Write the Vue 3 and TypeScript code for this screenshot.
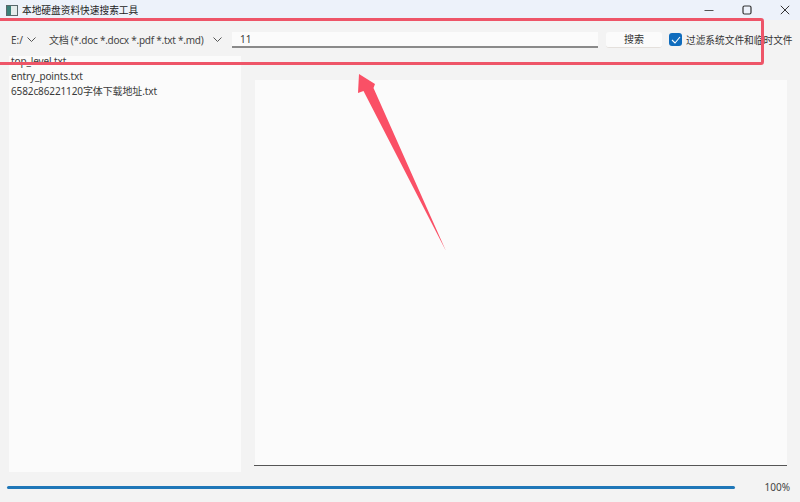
<script setup lang="ts">
const files: string[] = ['top_level.txt', 'entry_points.txt', '6582c86221120字体下载地址.txt']
</script>

<template>
  <div class="win">
    <header class="title">
      <svg class="appicon" width="12" height="11" viewBox="0 0 12 11">
        <rect x="0.5" y="0.5" width="11" height="10" fill="#e4ecec" stroke="#59686c" />
        <rect x="1" y="1" width="4" height="9" fill="#3b8079" />
      </svg>
      <span class="title-text">本地硬盘资料快速搜索工具</span>
      <div class="winbtns">
        <svg width="10" height="10" viewBox="0 0 10 10"><path d="M0.5 5.5h9" stroke="#555" stroke-width="1" /></svg>
        <svg width="10" height="10" viewBox="0 0 10 10"><rect x="1" y="1" width="8" height="8" rx="1.5" fill="none" stroke="#333" stroke-width="1.2" /></svg>
        <svg width="10" height="10" viewBox="0 0 10 10"><path d="M0.8 0.8l8.4 8.4M9.2 0.8l-8.4 8.4" stroke="#333" stroke-width="1" /></svg>
      </div>
    </header>

    <div class="toolbar">
      <div class="combo drive">
        <span>E:/</span>
        <svg width="9" height="5" viewBox="0 0 9 5"><path d="M0.5 0.5l4 4 4-4" fill="none" stroke="#555" /></svg>
      </div>
      <div class="combo kind">
        <span class="kind-text">文档 (*.doc *.docx *.pdf *.txt *.md)</span>
        <svg width="9" height="5" viewBox="0 0 9 5"><path d="M0.5 0.5l4 4 4-4" fill="none" stroke="#555" /></svg>
      </div>
      <div class="search-input">11</div>
      <button class="search-btn">搜索</button>
      <label class="check">
        <span class="box">
          <svg width="10" height="8" viewBox="0 0 10 8"><path d="M1 4l3 3 5-6" fill="none" stroke="#fff" stroke-width="1.1" /></svg>
        </span>
        <span class="check-text">过滤系统文件和临时文件</span>
      </label>
    </div>

    <main class="body">
      <div class="list">
        <ul>
          <li v-for="f in files" :key="f">{{ f }}</li>
        </ul>
      </div>
      <section class="pane"><div class="preview"></div></section>
    </main>

    <footer class="foot">
      <div class="bar"></div>
      <span class="pct">100%</span>
    </footer>

    <div class="mark"></div>
    <svg class="arrow" width="100" height="185" viewBox="350 70 100 185">
      <polygon points="359,74 375,84 373.5,88 446,251 363.5,91 358,93" fill="#fa5066" />
    </svg>
  </div>
</template>

<style>
html, body { margin: 0; background: #f3f3f3; }
</style>

<style scoped>
.win {
  position: relative;
  width: 800px;
  height: 502px;
  overflow: hidden;
  display: flex;
  flex-direction: column;
  background: #f3f3f3;
  color: #3a3a3a;
  font: 10px "Noto Sans", "Noto Sans CJK SC", sans-serif;
}
.title {
  height: 20px;
  flex: none;
  display: flex;
  align-items: center;
  padding-left: 6px;
  background: #edf2fa;
}
.appicon { margin-right: 4px; }
.title-text { font-size: 9.7px; color: #222; }
.winbtns {
  margin-left: auto;
  margin-right: 10px;
  display: flex;
  gap: 28px;
}
.toolbar {
  height: 36px;
  box-sizing: border-box;
  padding: 3px 0 0 11px;
  flex: none;
  display: flex;
  align-items: center;
  white-space: nowrap;
}
.combo {
  display: flex;
  align-items: center;
  justify-content: space-between;
  color: #444;
}
.drive { width: 25px; margin-right: 13px; }
.kind { width: 174px; margin-right: 9px; }
.kind svg { margin-right: 1px; }
.kind-text { letter-spacing: -0.25px; }
.search-input {
  width: 366px;
  height: 16px;
  box-sizing: border-box;
  padding-left: 8px;
  line-height: 14px;
  background: #fbfbfb;
  border-bottom: 2px solid #8a8a8a;
  margin-right: 8px;
}
.search-btn {
  width: 56px;
  height: 16px;
  padding: 0;
  border: 0;
  border-bottom: 1px solid #e4e0dc;
  border-radius: 3px;
  background: #fbfbfb;
  color: #333;
  font: inherit;
  line-height: 15px;
  margin-right: 7px;
}
.check { display: flex; align-items: center; gap: 4px; }
.box {
  width: 13px;
  height: 13px;
  border-radius: 3px;
  background: #0f6cbd;
  display: flex;
  align-items: center;
  justify-content: center;
}
.check-text { font-size: 9.7px; color: #333; }
.body {
  flex: 1;
  min-height: 0;
  display: flex;
  padding-left: 9px;
  padding-right: 13px;
}
.list {
  width: 232px;
  height: 416px;
  box-sizing: border-box;
  padding-left: 2px;
  background: #fbfbfb;
}
.list ul {
  margin: -2px 0 0;
  padding: 0;
  list-style: none;
  line-height: 15px;
  letter-spacing: -0.12px;
}
.pane {
  flex: 1;
  margin-left: 13px;
  padding-top: 24px;
}
.preview {
  height: 385px;
  background: linear-gradient(to right, transparent 1px, #fbfbfb 1px);
  border-bottom: 1px solid #555;
}
.foot {
  height: 30px;
  flex: none;
  display: flex;
  align-items: center;
  padding: 0 10px 0 7px;
}
.bar {
  width: 728px;
  height: 3px;
  border-radius: 2px;
  background: #1f77b8;
}
.pct { margin-left: auto; color: #444; }
.mark {
  position: absolute;
  left: -3px;
  top: 18px;
  width: 761px;
  height: 41px;
  border: 3px solid #ee5568;
  border-radius: 3px;
}
.arrow { position: absolute; left: 350px; top: 70px; }
</style>
